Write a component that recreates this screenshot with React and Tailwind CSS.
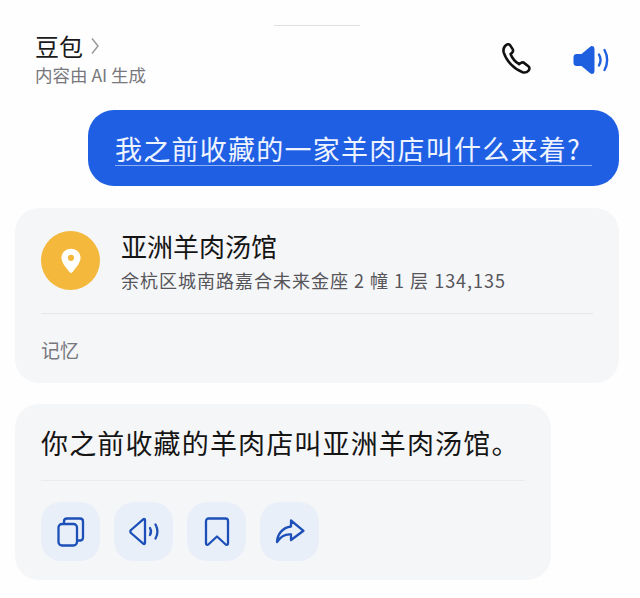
const FONT = { fontFamily: '"Noto Sans CJK SC", "Noto Sans", sans-serif' }

function PhoneIcon() {
  return (
    <svg width="36" height="36" viewBox="0 0 32 32" fill="none" stroke="#111" strokeWidth="2.300" strokeLinejoin="round">
      <path d="M5.500 2.600c1.200-.9 2.800-.7 3.700.6l1.900 2.900c.7 1.100.6 2.500-.4 3.400l-1.300 1.100c1.400 3.700 4 6.900 7.600 9.100l1.500-1c1.100-.7 2.500-.6 3.400.3l3.300 2.600c1.200 1 1.300 2.700.2 3.800-1.300 1.400-3.300 2.100-5.300 1.500C13 24.500 5.800 17.300 3.300 9.200 2.700 6.600 3.600 4 5.500 2.600z" />
    </svg>
  )
}

function SpeakerIcon({ filled }) {
  if (filled) {
    return (
      <svg width="38" height="32" viewBox="0 0 38 32" fill="none">
        <path d="M17.500 2.500c2-1.300 4 .2 4 2.500v22c0 2.300-2 3.800-4 2.500l-9-7.500H3.500C1.800 22 .5 20.700.5 19v-6c0-1.700 1.300-3 3-3h5z" fill="#1e5fe0" />
        <path d="M26 10.500c2 3.500 2 7.500 0 11" stroke="#1e5fe0" strokeWidth="2.400" strokeLinecap="round" />
        <path d="M31.500 6c3.500 6 3.500 14 0 20" stroke="#1e5fe0" strokeWidth="2.400" strokeLinecap="round" />
      </svg>
    )
  }
  return (
    <svg width="32" height="29" viewBox="0 0 32 29" fill="none" stroke="#1c50b8" strokeWidth="2.300" strokeLinecap="round" strokeLinejoin="round">
      <path d="M17 3v23c0 .8-.9 1.200-1.500.8L3 16c-.9-.7-.9-2.300 0-3L15.500 2.200c.6-.5 1.500-.1 1.500.8z" />
      <path d="M22 11c1.300 2.300 1.300 4.700 0 7" />
      <path d="M27.500 7.500c2.500 4.500 2.500 9.500 0 14" />
    </svg>
  )
}

function PinIcon() {
  return (
    <svg width="20" height="26" viewBox="0 0 22 28">
      <path d="M11 .5C5 .5.5 5 .5 10.800.5 16 7 23.500 9.800 26.600c.7.7 1.700.7 2.400 0C15 23.500 21.500 16 21.500 10.800 21.500 5 17 .5 11 .5z" fill="#fff" />
      <circle cx="11" cy="10.500" r="3.400" fill="#f4b93c" />
    </svg>
  )
}

function CopyIcon() {
  return (
    <svg width="28" height="30" viewBox="0 0 28 30" fill="none" stroke="#1c50b8" strokeWidth="2.300" strokeLinejoin="round">
      <rect x="1.500" y="7" width="18.500" height="21.500" rx="3.500" />
      <path d="M7 7V4.500C7 2.800 8.300 1.500 10 1.500h13c1.700 0 3 1.300 3 3v16c0 1.700-1.300 3-3 3h-3" />
    </svg>
  )
}

function BookmarkIcon() {
  return (
    <svg width="26" height="30" viewBox="0 0 26 30" fill="none" stroke="#1c50b8" strokeWidth="2.300" strokeLinejoin="round">
      <path d="M4.500 1.500h17c1.400 0 2.500 1.100 2.500 2.500v22.500c0 1.200-1.400 1.800-2.300 1L13 19.500l-8.700 8c-.9.800-2.300.2-2.300-1V4c0-1.400 1.100-2.500 2.500-2.500z" />
    </svg>
  )
}

function ShareIcon() {
  return (
    <svg width="32" height="28" viewBox="0 0 32 28" fill="none" stroke="#1c50b8" strokeWidth="2.300" strokeLinejoin="round" strokeLinecap="round">
      <path d="M17 2.500 29.500 12.800 17 22v-5.500c-5.500-.5-10 1.500-14 7.500.5-8 5.500-14.500 14-15.500z" />
    </svg>
  )
}

function ActionButton({ children }) {
  return (
    <div className="flex h-[59px] w-[59px] items-center justify-center rounded-[20px] bg-[#e9eff8]">
      {children}
    </div>
  )
}

export default function App() {
  return (
    <div className="h-[598px] w-[640px] overflow-hidden bg-[#fefeff] pl-[15px] pr-[21px] pt-[25px]" style={FONT}>
      <div className="ml-[259px] h-px w-[86px] bg-[#dfdfe2]" />

      {/* Header */}
      <div className="mt-[5px] flex items-start justify-between pl-5">
        <div>
          <div className="flex items-center gap-[7px] text-[24px] leading-[30px] text-[#1a1a1a]">
            豆包
            <svg width="10" height="18" viewBox="0 0 10 18" fill="none" stroke="#9a9a9a" strokeWidth="1.500">
              <path d="M2 1.500 8 9l-6 7.500" />
            </svg>
          </div>
          <div className="mt-[4px] text-[17.500px] leading-[20px] text-[#77777c]">内容由 AI 生成</div>
        </div>
        <div className="mr-[8px] mt-[11px] flex items-center gap-[37px]">
          <PhoneIcon />
          <SpeakerIcon filled />
        </div>
      </div>

      {/* Question bubble */}
      <div className="ml-[73px] mt-[25px] flex h-[76px] items-center rounded-[26px] bg-[#1f5fe4] pl-[27px] pt-[2px]">
        <span className="border-b border-[#8fb2f5] pr-[11px] text-[27px] leading-[32px] tracking-[1.250px] text-[#eef4ff]">
          我之前收藏的一家羊肉店叫什么来着?
        </span>
      </div>

      {/* Memory card */}
      <div className="mt-[22px] h-[175px] rounded-[24px] bg-[#f5f6f8] px-[26px] pt-[22px]">
        <div className="flex items-center gap-[21px]">
          <div className="flex h-[59px] w-[59px] items-center justify-center rounded-full bg-[#f4b93c]">
            <PinIcon />
          </div>
          <div>
            <div className="text-[26px] leading-[32px] text-[#151515]">亚洲羊肉汤馆</div>
            <div className="mt-[7px] text-[18px] leading-[22px] tracking-[1px] text-[#55555a]">
              余杭区城南路嘉合未来金座 2 幢 1 层 134,135
            </div>
          </div>
        </div>
        <div className="mt-[22px] h-px bg-[#e5e6e9]" />
        <div className="mt-[24px] text-[19px] leading-[24px] text-[#77777c]">记忆</div>
      </div>

      {/* Answer card */}
      <div className="mt-[21px] h-[176px] w-[536px] rounded-[24px] bg-[#f5f6f8] px-[26px] pt-[21px]">
        <div className="text-[27px] leading-[36px] tracking-[1.150px] text-[#151515]">你之前收藏的羊肉店叫亚洲羊肉汤馆。</div>
        <div className="mt-[19px] h-px bg-[#eaebee]" />
        <div className="mt-[21px] flex gap-[14px]">
          <ActionButton><CopyIcon /></ActionButton>
          <ActionButton><SpeakerIcon /></ActionButton>
          <ActionButton><BookmarkIcon /></ActionButton>
          <ActionButton><ShareIcon /></ActionButton>
        </div>
      </div>
    </div>
  )
}
